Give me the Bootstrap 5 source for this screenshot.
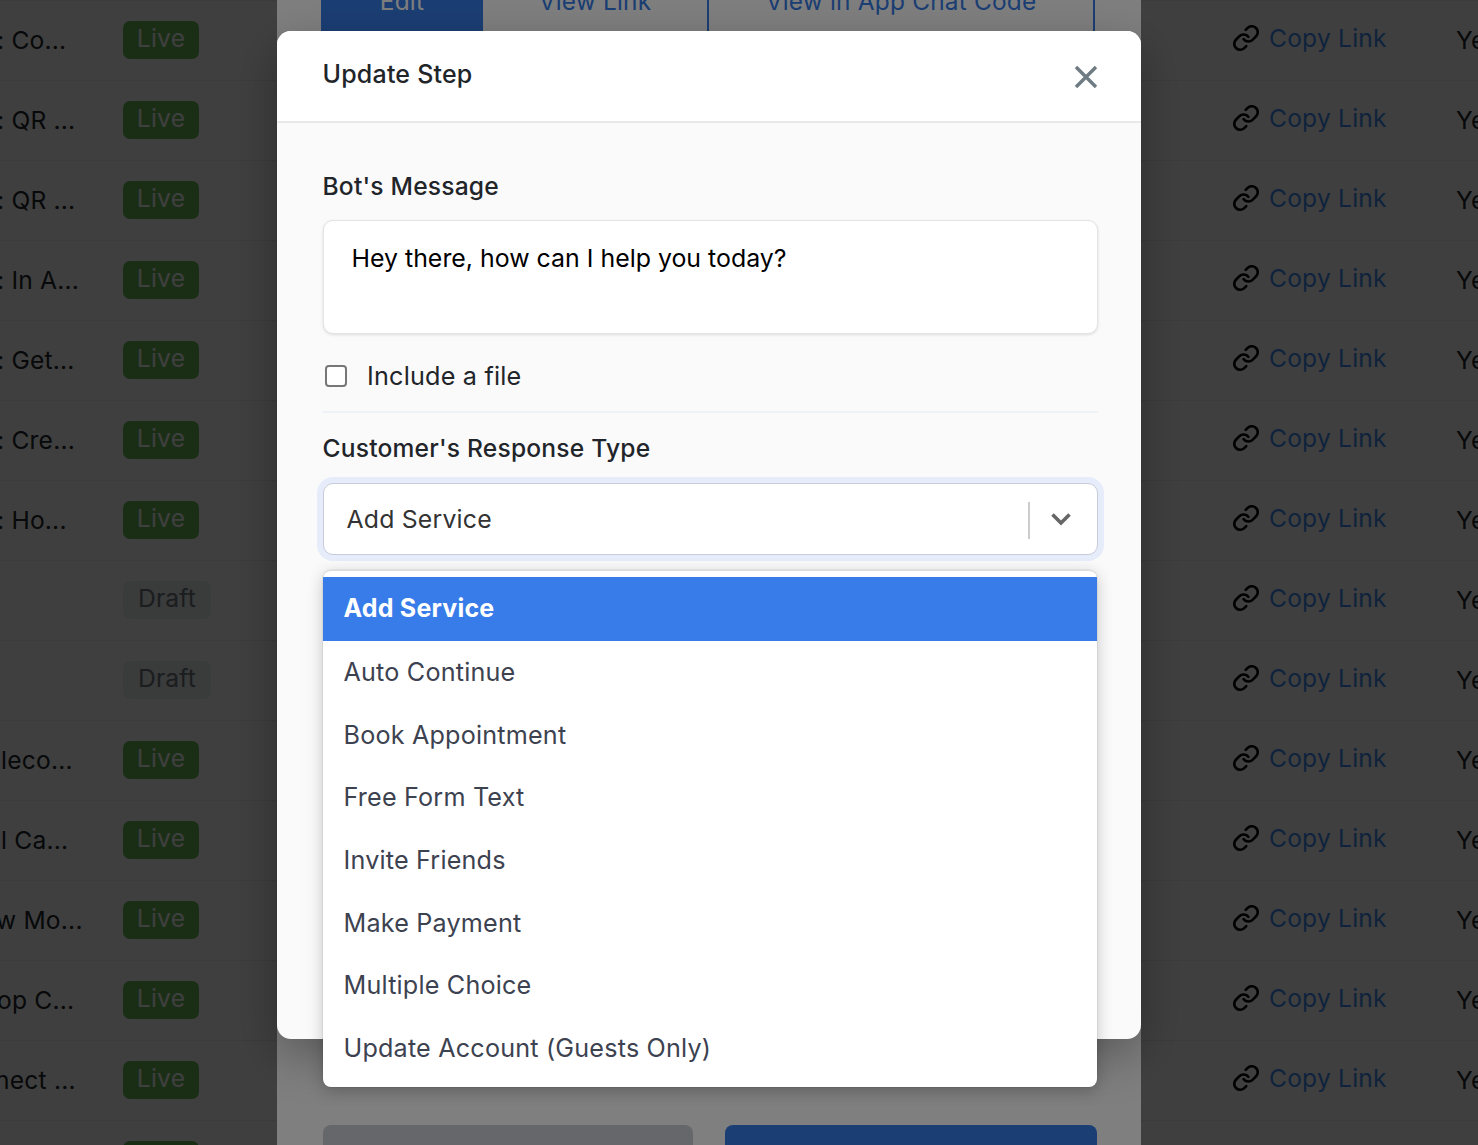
<!doctype html>
<html lang="en"><head><meta charset="utf-8">
<link href="https://cdn.jsdelivr.net/npm/bootstrap@5.3.0/dist/css/bootstrap.min.css" rel="stylesheet">
<style>
html,body{height:100%;overflow:hidden}
body{background:#fff;font-family:Inter,"Liberation Sans",sans-serif;color:#212529;font-size:24.6px;letter-spacing:.2px}
.tbl-rows{position:relative;width:1478px}
.trow{height:80px;border-top:1px solid #ececec;display:flex;align-items:center;box-sizing:border-box}
.tname{width:123px;overflow:hidden;white-space:nowrap;color:#212529;flex:none;margin-top:-1px}
.tstat{width:1110px;flex:none;display:flex;margin-top:-1px}
.pill{display:block;height:38px;line-height:34px;border-radius:7px;font-size:24.6px;text-align:center}
.pill-live{background:#68b858;color:#fff;width:76px}
.pill-draft{background:#e9ecef;color:#6c757d;width:88px}
.tcopy{width:223px;flex:none;display:flex;align-items:center;gap:10px;color:#3f8cf5;margin-top:-5px}
.tyes{flex:none;white-space:nowrap;width:60px;overflow:hidden;margin-top:-1px}
.veil{position:fixed;inset:0;background:rgba(0,0,0,.5)}
.sheet{position:fixed;top:0;bottom:0;left:277px;width:864px;background:#fff;padding:0 44px 0 44px;display:flex;flex-direction:column;justify-content:space-between}
.tabs-top{display:flex;margin-top:-20px;height:51px;font-size:24.4px;line-height:32px}
.tab-a{width:162px;background:#377ce8;color:#fff;text-align:center;padding-top:5px}
.tab-b{width:224px;text-align:center;color:#377ce8;padding-top:5px}
.tab-c{width:388px;text-align:center;color:#377ce8;padding-top:5px;border:2px solid #377ce8;border-top:0;border-bottom:0}
.foot-btns{display:flex;gap:32px;padding:0 0 0 2px}
.fb{height:20px;border-radius:8px 8px 0 0;width:370px}
.fb-g{background:#ccced4}
.fb-b{background:#377ce8;width:372px}
.dlg{position:fixed;top:31px;left:277px;width:864px;height:1008px;background:#fafafa;border-radius:14px;box-shadow:0 16px 48px rgba(0,0,0,.3)}
.dlg-head{height:92px;background:#fff;border-radius:14px 14px 0 0;border-bottom:2px solid #e9e9e9;padding:0 43px 0 45.5px;display:flex;justify-content:space-between}
.dlg-title{margin:27px 0 0;font-size:25px;line-height:32px;font-weight:500;color:#212529}
.x-btn{background:none;border:0;padding:0;margin-top:34px;width:24px;height:24px;line-height:0}
.dlg-body{padding:46px 43px 0 45.5px}
.lab{font-size:24.6px;line-height:34px;font-weight:500;margin-bottom:17px;display:block;color:#212529}
.msg{height:114px;background:#fff;border:1px solid #e4e4e4;border-radius:10px;box-shadow:0 1px 3px rgba(0,0,0,.12);padding:19px 28px;resize:none;color:#000;font-size:24.9px;line-height:36px;width:100%;display:block}
.chk{display:flex;align-items:center;margin-top:25px;gap:20px;height:34px;padding-left:2.5px;font-size:25.2px}
.chk span{padding-top:2px}
.chk input{width:22px;height:22px;margin:0;border:2px solid #777;border-radius:4px;background:#fff;appearance:none;flex:none}
.rule{border:0;border-top:2px solid #eef2f7;opacity:1;margin:18px 0 18px}
.pick{position:relative;height:72px;background:#fff;border:1px solid #c6ccd9;border-radius:10px;box-shadow:0 0 0 6px #e6ecfa,0 1px 3px rgba(0,0,0,.15);display:flex;align-items:center;padding-left:23px;margin-top:18px;color:#333;font-size:24.8px}
.pick-text{padding-top:2px}
.lab-tight{margin-bottom:0}
.pick-sep{position:absolute;left:704px;top:18px;height:37px;width:2px;background:#ccc}
.pick-chev{position:absolute;left:726px;top:27px;line-height:0}
.opts{position:absolute;left:-1px;top:86px;width:774px;background:#fff;border:0;border-top:1px solid #ddd;border-radius:8px;padding:6px 0 7px;box-shadow:0 0 0 1px rgba(0,0,0,.05),0 4px 16px rgba(0,0,0,.22);margin:0;overflow:hidden;--bs-dropdown-min-width:0}
.opt{height:62.67px;display:flex;align-items:center;padding:1px 21px 0;color:#3d4250;font-size:25.15px;border:0;background:none}
.opt-on{height:64px;padding-top:0;background:#377ce8;color:#fff;font-weight:700;font-size:25px}
</style></head>
<body>
<svg class="d-none"><defs><symbol id="chain" viewBox="1 1 22 22"><path d="M10 13a5 5 0 0 0 7.54.54l3-3a5 5 0 0 0-7.07-7.07l-1.72 1.71" fill="none" stroke="currentColor" stroke-width="2.2" stroke-linecap="round"/><path d="M14 11a5 5 0 0 0-7.54-.54l-3 3a5 5 0 0 0 7.07 7.07l1.71-1.71" fill="none" stroke="currentColor" stroke-width="2.2" stroke-linecap="round"/></symbol></defs></svg>
<div class="tbl-rows" id="rows"></div>
<div class="veil"></div>
<div class="sheet">
  <div class="tabs-top"><div class="tab-a">Edit</div><div class="tab-b">View Link</div><div class="tab-c">View in App Chat Code</div></div>
  <div class="foot-btns"><div class="fb fb-g"></div><div class="fb fb-b"></div></div>
</div>
<div class="veil"></div>
<div class="dlg">
  <div class="dlg-head">
    <h5 class="dlg-title">Update Step</h5>
    <button class="x-btn" aria-label="Close"><svg width="24" height="24" viewBox="0 0 24 24"><path d="M2 2L22 22M22 2L2 22" stroke="#6f7b83" stroke-width="3.4" fill="none"/></svg></button>
  </div>
  <div class="dlg-body">
    <label class="lab">Bot's Message</label>
    <textarea class="form-control msg">Hey there, how can I help you today?</textarea>
    <label class="chk"><input type="checkbox"><span>Include a file</span></label>
    <hr class="rule">
    <label class="lab lab-tight">Customer's Response Type</label>
    <div class="pick"><span class="pick-text">Add Service</span>
      <span class="pick-sep"></span>
      <span class="pick-chev"><svg width="22" height="16" viewBox="0 0 22 16"><path d="M2.5 3.5L11 12L19.5 3.5" stroke="#666" stroke-width="3.6" fill="none"/></svg></span>
      <div class="dropdown-menu show opts">
        <div class="opt opt-on">Add Service</div>
        <div class="opt">Auto Continue</div>
        <div class="opt">Book Appointment</div>
        <div class="opt">Free Form Text</div>
        <div class="opt">Invite Friends</div>
        <div class="opt">Make Payment</div>
        <div class="opt">Multiple Choice</div>
        <div class="opt">Update Account (Guests Only)</div>
      </div>
    </div>
  </div>
</div>
<script src="https://cdn.jsdelivr.net/npm/bootstrap@5.3.0/dist/js/bootstrap.bundle.min.js"></script>
<script>
var d=[[": Co...",1,-3],[": QR ...",1,-3],[": QR ...",1,-3],[": In A...",1,-3],[": Get...",1,-3],[": Cre...",1,-3],[": Ho...",1,-3],["",0,0],["",0,0],["leco...",1,1],["l Ca...",1,1],["w Mo...",1,-4],["op C...",1,-3],["nect ...",1,-5],["",1,0]];
document.getElementById('rows').innerHTML=d.map(function(r){return '<div class="trow"><div class="tname"><span style="margin-left:'+r[2]+'px">'+r[0]+'</span></div><div class="tstat"><span class="pill '+(r[1]?'pill-live':'pill-draft')+'">'+(r[1]?'Live':'Draft')+'</span></div><div class="tcopy"><svg width="26" height="26" style="color:#000"><use href="#chain"/></svg><span>Copy Link</span></div><div class="tyes">Yes</div></div>'}).join('');
</script>
</body></html>
